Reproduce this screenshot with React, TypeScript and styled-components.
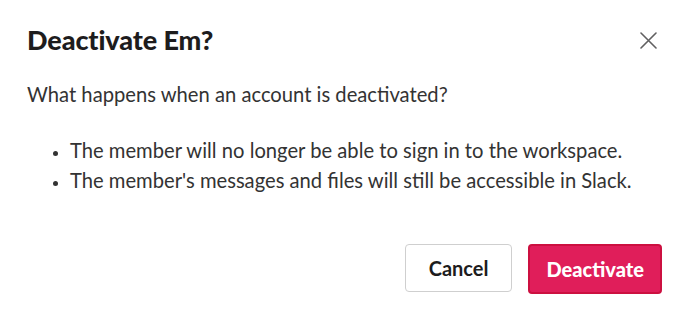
import React from "react";
import styled, { createGlobalStyle } from "styled-components";

const Global = createGlobalStyle`
  html, body { margin: 0; padding: 0; background: #fff; }
  body { font-family: Lato, "Noto Sans", sans-serif; -webkit-font-smoothing: antialiased; }
`;

const Modal = styled.div`
  width: 690px;
  height: 316px;
  box-sizing: border-box;
  padding: 23px 28px 0 27px;
  background: #fff;
  color: #1d1c1d;
`;

const Header = styled.div`
  display: flex;
  align-items: center;
  justify-content: space-between;
  height: 34px;
`;

const Title = styled.h1`
  margin: 0;
  font-size: 27px;
  line-height: 34px;
  font-weight: 900;
  letter-spacing: -0.1px;
  color: #1d1c1d;
`;

const Close = styled.button`
  border: none;
  background: none;
  padding: 0;
  width: 17px;
  height: 17px;
  display: flex;
  align-items: center;
  justify-content: center;
  margin-right: 5px;
`;

const Question = styled.p`
  margin: 25px 0 0;
  font-size: 20.2px;
  line-height: 24px;
  color: #333;
`;

const List = styled.ul`
  margin: 29px 0 0;
  padding-left: 43px;
  font-size: 20.2px;
  line-height: 30px;
  color: #333;
  li::marker { font-size: 16px; }
`;

const Footer = styled.div`
  display: flex;
  justify-content: flex-end;
  align-items: flex-start;
  gap: 16px;
  margin-top: 49px;
`;

const Button = styled.button<{ $primary?: boolean }>`
  box-sizing: border-box;
  height: ${p => (p.$primary ? 50 : 48)}px;
  padding: 0 ${p => (p.$primary ? 16 : 23)}px;
  font-family: Lato, sans-serif;
  font-size: 20px;
  font-weight: ${p => (p.$primary ? 900 : 700)};
  border-radius: 4px;
  border: ${p => (p.$primary ? "2px solid #cc1040" : "1px solid #cfcfcf")};
  background: ${p => (p.$primary ? "#e01e5a" : "#fff")};
  color: ${p => (p.$primary ? "#fff" : "#1d1c1d")};
`;

export default function App() {
  return (
    <>
      <Global />
      <Modal>
        <Header>
          <Title>Deactivate Em?</Title>
          <Close aria-label="Close">
            <svg width="17" height="17" viewBox="0 0 17 17">
              <path d="M1 1L16 16M16 1L1 16" stroke="#616061" strokeWidth="1.6" strokeLinecap="round" />
            </svg>
          </Close>
        </Header>
        <Question>What happens when an account is deactivated?</Question>
        <List>
          <li>The member will no longer be able to sign in to the workspace.</li>
          <li>The member's messages and files will still be accessible in Slack.</li>
        </List>
        <Footer>
          <Button>Cancel</Button>
          <Button $primary>Deactivate</Button>
        </Footer>
      </Modal>
    </>
  );
}
